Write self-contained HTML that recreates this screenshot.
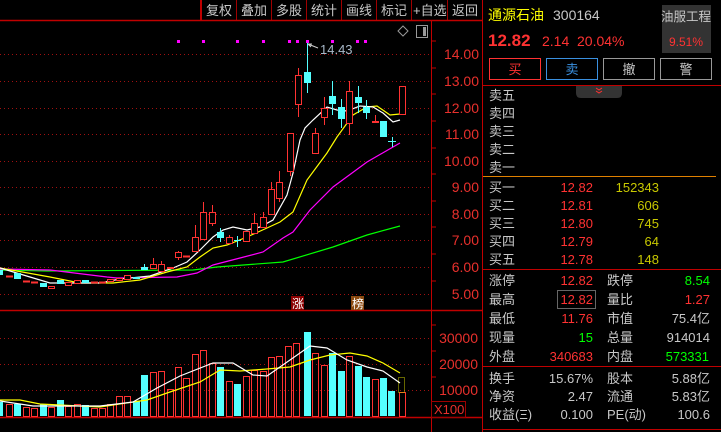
<!DOCTYPE html>
<html><head><meta charset="utf-8"><style>
html,body{margin:0;padding:0;background:#000;width:721px;height:432px;overflow:hidden}
svg{display:block;font-family:"Liberation Sans","Noto Sans CJK SC",sans-serif}
</style></head><body>
<svg width="721" height="432" viewBox="0 0 721 432" xmlns="http://www.w3.org/2000/svg">
<rect width="721" height="432" fill="#000"/>
<!-- toolbar -->
<g fill="#c8c8c8" font-size="13">
<text x="206" y="15">复权</text><text x="241" y="15">叠加</text><text x="276" y="15">多股</text><text x="311" y="15">统计</text><text x="346" y="15">画线</text><text x="381" y="15">标记</text><text x="413" y="15">+自选</text><text x="452" y="15">返回</text>
</g>
<g stroke="#a00000" stroke-width="1">
<line x1="236.5" y1="0" x2="236.5" y2="20"/><line x1="271.5" y1="0" x2="271.5" y2="20"/><line x1="306.5" y1="0" x2="306.5" y2="20"/><line x1="341.5" y1="0" x2="341.5" y2="20"/><line x1="376.5" y1="0" x2="376.5" y2="20"/><line x1="411.5" y1="0" x2="411.5" y2="20"/><line x1="447.5" y1="0" x2="447.5" y2="20"/>
</g>
<line x1="201" y1="0" x2="201" y2="20" stroke="#c00000" stroke-width="2"/>
<line x1="0" y1="20.5" x2="483" y2="20.5" stroke="#c00000" stroke-width="1.5"/>
<!-- grid -->
<g stroke="#a01010" stroke-width="1" stroke-dasharray="1,3">
<line x1="0" x2="431" y1="54.5" y2="54.5"/><line x1="0" x2="431" y1="81.5" y2="81.5"/><line x1="0" x2="431" y1="108.5" y2="108.5"/><line x1="0" x2="431" y1="134.5" y2="134.5"/><line x1="0" x2="431" y1="161.5" y2="161.5"/><line x1="0" x2="431" y1="187.5" y2="187.5"/><line x1="0" x2="431" y1="214.5" y2="214.5"/><line x1="0" x2="431" y1="240.5" y2="240.5"/><line x1="0" x2="431" y1="267.5" y2="267.5"/><line x1="0" x2="431" y1="294.5" y2="294.5"/>
<line x1="0" x2="431" y1="338.5" y2="338.5"/><line x1="0" x2="431" y1="364.5" y2="364.5"/><line x1="0" x2="431" y1="390.5" y2="390.5"/>
</g>
<line x1="431.5" y1="20" x2="431.5" y2="432" stroke="#c00000"/>
<line x1="0" y1="310.5" x2="483" y2="310.5" stroke="#c00000" stroke-width="1.5"/>
<line x1="0" y1="417.5" x2="483" y2="417.5" stroke="#c00000" stroke-width="1.5"/>
<g stroke="#c00000"><line x1="431" x2="436" y1="41" y2="41"/><line x1="431" x2="436" y1="68" y2="68"/><line x1="431" x2="436" y1="94" y2="94"/><line x1="431" x2="436" y1="121" y2="121"/><line x1="431" x2="436" y1="148" y2="148"/><line x1="431" x2="436" y1="174" y2="174"/><line x1="431" x2="436" y1="201" y2="201"/><line x1="431" x2="436" y1="227" y2="227"/><line x1="431" x2="436" y1="254" y2="254"/><line x1="431" x2="436" y1="281" y2="281"/><line x1="431" x2="436" y1="325" y2="325"/><line x1="431" x2="436" y1="351" y2="351"/><line x1="431" x2="436" y1="377" y2="377"/></g>
<g fill="#e8302c" font-size="14" text-anchor="end">
<text x="479" y="59">14.00</text><text x="479" y="86">13.00</text><text x="479" y="113">12.00</text><text x="479" y="139">11.00</text><text x="479" y="166">10.00</text><text x="479" y="192">9.00</text><text x="479" y="219">8.00</text><text x="479" y="245">7.00</text><text x="479" y="272">6.00</text><text x="479" y="299">5.00</text>
<text x="478" y="343">30000</text><text x="478" y="369">20000</text><text x="478" y="395">10000</text>
</g>
<rect x="431.5" y="401.5" width="34" height="16" fill="none" stroke="#a00000"/>
<text x="434" y="414" fill="#e8302c" font-size="13">X100</text>
<!-- top icons -->
<path d="M403 26 L408 31 L403 36 L398 31 Z" fill="none" stroke="#999"/>
<rect x="416.5" y="25.5" width="11" height="12" fill="none" stroke="#999"/><rect x="423" y="27" width="3" height="9" fill="#999"/>
<!-- purple dots -->
<g fill="#ff00ff"><rect x="177" y="40" width="3" height="3"/><rect x="202" y="40" width="3" height="3"/><rect x="236" y="40" width="3" height="3"/><rect x="262" y="40" width="3" height="3"/><rect x="288" y="40" width="3" height="3"/><rect x="296" y="40" width="3" height="3"/><rect x="306" y="40" width="3" height="3"/><rect x="331" y="40" width="3" height="3"/><rect x="356" y="40" width="3" height="3"/><rect x="364" y="40" width="3" height="3"/></g>
<path d="M308 44 L318 48 M308 44 L312 44 M308 44 L311 47" stroke="#ccc" fill="none"/>
<text x="320" y="54" fill="#a8b8c8" font-size="13">14.43</text>
<!-- MAs main -->
<g fill="none" stroke-width="1.2">
<polyline stroke="#00ff00" points="0,270 47,271 193,270 217,267 283,262 333,247 367,235 400,226"/>
<polyline stroke="#ff00ff" points="0,269 50,270 107,277 117,278 177,277 197,273 213,265 240,258 263,252 283,238 293,232 310,210 333,187 367,162 393,147 400,143"/>
<polyline stroke="#ffff00" points="0,268 50,277 80,283 113,283 140,280 167,272 187,267 200,257 213,248 227,245 247,237 267,228 280,222 293,212 307,180 327,153 337,137 353,115 367,107 377,106 390,115 400,114"/>
<polyline stroke="#ffffff" points="0,268 30,277 50,283 100,283 120,279 150,276 173,268 187,262 200,250 213,237 223,230 233,227 247,230 260,227 273,220 287,195 293,173 300,140 305,128 313,120 327,107 337,110 347,111 360,106 373,107 383,113 393,122 400,120"/>
</g>
<!-- candles -->
<g fill="#000" stroke="#ff3232" stroke-width="1">
<rect x="6.5" y="276" width="6" height="1" fill="#ff3232"/>
<rect x="23.5" y="281" width="6" height="1" fill="#ff3232"/>
<rect x="31.5" y="282" width="6" height="1" fill="#ff3232"/>
<rect x="48.5" y="286.5" width="6" height="2"/>
<rect x="65.5" y="282.5" width="6" height="3"/>
<rect x="74.5" y="280.5" width="6" height="3"/>
<rect x="91.5" y="282" width="6" height="1" fill="#ff3232"/>
<rect x="99.5" y="282" width="6" height="1" fill="#ff3232"/>
<rect x="107.5" y="279.5" width="6" height="2"/>
<rect x="116.5" y="278.5" width="6" height="2"/>
<rect x="124.5" y="275.5" width="6" height="4"/>
<line x1="153.5" y1="258" x2="153.5" y2="264"/><rect x="150.5" y="264.5" width="6" height="4"/>
<line x1="161.5" y1="261" x2="161.5" y2="264"/><rect x="158.5" y="264.5" width="6" height="7"/>
<rect x="167.5" y="267.5" width="6" height="1"/>
<line x1="178.5" y1="251" x2="178.5" y2="260"/><rect x="175.5" y="252.5" width="6" height="5"/>
<rect x="183.5" y="256" width="6" height="1" fill="#ff3232"/>
<line x1="195.5" y1="225" x2="195.5" y2="251"/><rect x="192.5" y="237.5" width="6" height="14"/>
<line x1="203.5" y1="202" x2="203.5" y2="239"/><rect x="200.5" y="212.5" width="6" height="27"/>
<line x1="212.5" y1="205" x2="212.5" y2="226"/><rect x="209.5" y="212.5" width="6" height="11"/>
<line x1="229.5" y1="235" x2="229.5" y2="243"/><rect x="226.5" y="237.5" width="6" height="6"/>
<rect x="243.5" y="231.5" width="6" height="10"/>
<line x1="254.5" y1="213" x2="254.5" y2="223"/><rect x="251.5" y="223.5" width="6" height="10"/>
<line x1="263.5" y1="212" x2="263.5" y2="217"/><rect x="260.5" y="217.5" width="6" height="10"/>
<line x1="271.5" y1="182" x2="271.5" y2="189"/><rect x="268.5" y="189.5" width="6" height="25"/>
<line x1="279.5" y1="171" x2="279.5" y2="182"/><rect x="276.5" y="182.5" width="6" height="16"/><line x1="279.5" y1="199" x2="279.5" y2="202"/>
<rect x="287.5" y="133.5" width="6" height="38"/><line x1="290.5" y1="172" x2="290.5" y2="176"/>
<line x1="298.5" y1="68" x2="298.5" y2="75"/><rect x="295.5" y="75.5" width="6" height="29"/><line x1="298.5" y1="105" x2="298.5" y2="117"/>
<line x1="315.5" y1="128" x2="315.5" y2="133"/><rect x="312.5" y="133.5" width="6" height="20"/>
<line x1="324.5" y1="97" x2="324.5" y2="108"/><rect x="321.5" y="108.5" width="6" height="9"/><line x1="324.5" y1="118" x2="324.5" y2="125"/>
<line x1="349.5" y1="81" x2="349.5" y2="91"/><rect x="346.5" y="91.5" width="6" height="32"/><line x1="349.5" y1="124" x2="349.5" y2="135"/>
<line x1="375.5" y1="115" x2="375.5" y2="121"/><rect x="372.5" y="121.5" width="6" height="1"/>
<rect x="399.5" y="86.5" width="6" height="28"/>
</g>
<g fill="#54ffff" stroke="#54ffff" stroke-width="1">
<rect x="0" y="270" width="3" height="5" stroke="none"/>
<rect x="14" y="273" width="7" height="6" stroke="none"/>
<rect x="40" y="283" width="7" height="4" stroke="none"/>
<rect x="57" y="280" width="7" height="4" stroke="none"/>
<rect x="82" y="280" width="7" height="3" stroke="none"/>
<rect x="133" y="277" width="7" height="2" stroke="none"/>
<line x1="144.5" y1="264" x2="144.5" y2="267"/><rect x="141" y="267" width="7" height="3" stroke="none"/>
<line x1="220.5" y1="228" x2="220.5" y2="242"/><rect x="217" y="232" width="7" height="6" stroke="none"/>
<line x1="237.5" y1="236" x2="237.5" y2="247"/><line x1="234" y1="240.5" x2="241" y2="240.5"/>
<line x1="307.5" y1="43" x2="307.5" y2="93"/><rect x="304" y="72" width="7" height="11" stroke="none"/>
<line x1="332.5" y1="81" x2="332.5" y2="115"/><rect x="329" y="96" width="7" height="8" stroke="none"/>
<line x1="341.5" y1="99" x2="341.5" y2="128"/><rect x="338" y="107" width="7" height="12" stroke="none"/>
<line x1="358.5" y1="86" x2="358.5" y2="113"/><rect x="355" y="97" width="7" height="6" stroke="none"/>
<line x1="366.5" y1="100" x2="366.5" y2="119"/><rect x="363" y="107" width="7" height="6" stroke="none"/>
<rect x="380" y="121" width="7" height="16" stroke="none"/>
<line x1="392.5" y1="137" x2="392.5" y2="147"/><line x1="388" y1="141.5" x2="396" y2="141.5"/>
</g>
<!-- 涨 榜 -->
<rect x="291" y="296" width="13" height="14" fill="#8b0000"/><text x="292" y="308" fill="#fff" font-size="12">涨</text>
<rect x="351" y="296" width="13" height="14" fill="#8b4a10"/><text x="352" y="308" fill="#fff" font-size="12">榜</text>
<!-- volume -->
<g fill="#54ffff">
<rect x="0" y="402" width="3" height="14"/><rect x="14" y="404" width="7" height="12"/><rect x="40" y="404" width="7" height="12"/><rect x="57" y="400" width="7" height="16"/><rect x="82" y="405" width="7" height="11"/><rect x="133" y="401" width="7" height="15"/><rect x="141" y="375" width="7" height="41"/><rect x="217" y="367" width="7" height="49"/><rect x="234" y="384" width="7" height="32"/><rect x="304" y="332" width="7" height="84"/><rect x="329" y="353" width="7" height="63"/><rect x="338" y="371" width="7" height="45"/><rect x="355" y="366" width="7" height="50"/><rect x="363" y="377" width="7" height="39"/><rect x="380" y="378" width="7" height="38"/><rect x="388" y="391" width="7" height="25"/>
</g>
<g fill="none" stroke="#ff3232">
<rect x="6.5" y="404.5" width="6" height="12"/><rect x="23.5" y="407.5" width="6" height="9"/><rect x="31.5" y="408.5" width="6" height="8"/><rect x="48.5" y="407.5" width="6" height="9"/><rect x="65.5" y="406.5" width="6" height="10"/><rect x="74.5" y="404.5" width="6" height="12"/><rect x="91.5" y="408.5" width="6" height="8"/><rect x="99.5" y="408.5" width="6" height="8"/><rect x="107.5" y="404.5" width="6" height="12"/><rect x="116.5" y="396.5" width="6" height="20"/><rect x="124.5" y="396.5" width="6" height="20"/><rect x="150.5" y="372.5" width="6" height="44"/><rect x="158.5" y="371.5" width="6" height="45"/><rect x="167.5" y="389.5" width="6" height="27"/><rect x="175.5" y="367.5" width="6" height="49"/><rect x="183.5" y="378.5" width="6" height="38"/><rect x="192.5" y="354.5" width="6" height="62"/><rect x="200.5" y="350.5" width="6" height="66"/><rect x="209.5" y="363.5" width="6" height="53"/><rect x="226.5" y="381.5" width="6" height="35"/><rect x="243.5" y="376.5" width="6" height="40"/><rect x="251.5" y="370.5" width="6" height="46"/><rect x="260.5" y="371.5" width="6" height="45"/><rect x="268.5" y="357.5" width="6" height="59"/><rect x="276.5" y="356.5" width="6" height="60"/><rect x="285.5" y="346.5" width="6" height="70"/><rect x="293.5" y="343.5" width="6" height="73"/><rect x="312.5" y="353.5" width="6" height="63"/><rect x="321.5" y="365.5" width="6" height="51"/><rect x="346.5" y="356.5" width="6" height="60"/><rect x="372.5" y="379.5" width="6" height="37"/><rect x="399.5" y="392.5" width="6" height="24"/>
</g>
<rect x="398.5" y="377.5" width="6" height="15" fill="none" stroke="#cccc00" stroke-dasharray="1,1"/>
<g fill="none" stroke-width="1.2">
<polyline stroke="#ffff00" points="0,400 20,400 40,404 100,407 133,402 147,400 167,393 200,382 220,370 240,371 267,369 290,367 310,360 330,355 350,353 367,356 383,363 400,373"/>
<polyline stroke="#ffffff" points="0,401 33,406 100,406 133,402 157,388 180,376 213,363 233,363 253,375 267,376 290,360 310,346 327,348 347,360 367,367 383,371 400,383"/>
</g>
<!-- right panel -->
<line x1="482.5" y1="0" x2="482.5" y2="432" stroke="#c00000"/>
<text x="488" y="20" fill="#ffff00" font-size="14">通源石油</text>
<text x="553" y="20" fill="#c8c8c8" font-size="14">300164</text>
<rect x="662" y="5" width="49" height="48" fill="#333"/>
<text x="686" y="21" fill="#c8c8c8" font-size="12.5" text-anchor="middle">油服工程</text>
<text x="686" y="46" fill="#ff3232" font-size="12" text-anchor="middle">9.51%</text>
<text x="488" y="46" fill="#ff3232" font-size="17" font-weight="bold">12.82</text>
<text x="542" y="46" fill="#ff3232" font-size="14">2.14</text>
<text x="577" y="46" fill="#ff3232" font-size="14">20.04%</text>
<rect x="489.5" y="58.5" width="51" height="21" fill="none" stroke="#ff3232"/>
<rect x="546.5" y="58.5" width="51" height="21" fill="none" stroke="#3a90e0"/>
<rect x="603.5" y="58.5" width="51" height="21" fill="none" stroke="#999"/>
<rect x="660.5" y="58.5" width="51" height="21" fill="none" stroke="#999"/>
<text x="515" y="74" fill="#ff3232" font-size="13" text-anchor="middle">买</text>
<text x="572" y="74" fill="#3a90e0" font-size="13" text-anchor="middle">卖</text>
<text x="629" y="74" fill="#c8c8c8" font-size="13" text-anchor="middle">撤</text>
<text x="686" y="74" fill="#c8c8c8" font-size="13" text-anchor="middle">警</text>
<line x1="482" y1="85.5" x2="721" y2="85.5" stroke="#c00000"/>
<path d="M576 86 H622 V93 Q622 98 617 98 H581 Q576 98 576 93 Z" fill="#333"/>
<path d="M596 88 L599 90 L602 88 M596 91 L599 93 L602 91" stroke="#ff3232" fill="none"/>
<g fill="#c8c8c8" font-size="13">
<text x="489" y="100">卖五</text><text x="489" y="118">卖四</text><text x="489" y="136">卖三</text><text x="489" y="154">卖二</text><text x="489" y="172">卖一</text>
<text x="489" y="192">买一</text><text x="489" y="210">买二</text><text x="489" y="228">买三</text><text x="489" y="246">买四</text><text x="489" y="264">买五</text>
<text x="489" y="285">涨停</text><text x="489" y="304">最高</text><text x="489" y="323">最低</text><text x="489" y="342">现量</text><text x="489" y="361">外盘</text>
<text x="607" y="285">跌停</text><text x="607" y="304">量比</text><text x="607" y="323">市值</text><text x="607" y="342">总量</text><text x="607" y="361">内盘</text>
<text x="489" y="383">换手</text><text x="489" y="401">净资</text><text x="489" y="419">收益(Ξ)</text>
<text x="607" y="383">股本</text><text x="607" y="401">流通</text><text x="607" y="419">PE(动)</text>
</g>
<line x1="483" y1="176.5" x2="716" y2="176.5" stroke="#e08000"/>
<g font-size="13" text-anchor="end">
<g fill="#ff3232"><text x="593" y="192">12.82</text><text x="593" y="210">12.81</text><text x="593" y="228">12.80</text><text x="593" y="246">12.79</text><text x="593" y="264">12.78</text>
<text x="593" y="285">12.82</text><text x="593" y="304">12.82</text><text x="593" y="323">11.76</text><text x="593" y="361">340683</text>
<text x="710" y="304">1.27</text></g>
<g fill="#c8c800"><text x="659" y="192">152343</text><text x="659" y="210">606</text><text x="659" y="228">745</text><text x="659" y="246">64</text><text x="659" y="264">148</text></g>
<g fill="#00ff00"><text x="710" y="285">8.54</text><text x="593" y="342">15</text><text x="709" y="361">573331</text></g>
<g fill="#c8c8c8"><text x="710" y="323">75.4亿</text><text x="710" y="342">914014</text>
<text x="593" y="383">15.67%</text><text x="593" y="401">2.47</text><text x="593" y="419">0.100</text>
<text x="710" y="383">5.88亿</text><text x="710" y="401">5.83亿</text><text x="710" y="419">100.6</text></g>
</g>
<rect x="557.5" y="290.5" width="38" height="18" fill="none" stroke="#666"/>
<line x1="482" y1="269.5" x2="721" y2="269.5" stroke="#c00000"/>
<line x1="482" y1="366.5" x2="721" y2="366.5" stroke="#c00000"/>
<line x1="482" y1="429.5" x2="721" y2="429.5" stroke="#c00000"/>
</svg>
</body></html>
